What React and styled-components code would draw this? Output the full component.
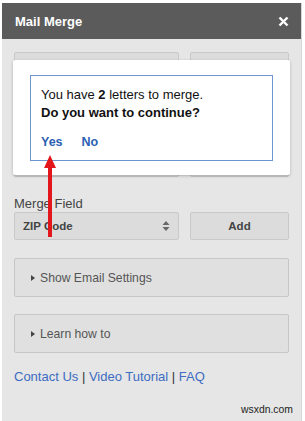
import React from 'react';
import styled, { createGlobalStyle } from 'styled-components';

const Global = createGlobalStyle`
  html, body {
    margin: 0;
    padding: 0;
    background: #ffffff;
    font-family: "Liberation Sans", Arial, sans-serif;
  }
`;

const Panel = styled.div`
  width: 300px;
  height: 418px;
  margin: 3px 0 0 2px;
  background: #e6e6e6;
  border-right: 1px solid #d6d6d6;
  box-sizing: border-box;
  display: flex;
  flex-direction: column;
`;

const Header = styled.div`
  height: 36px;
  background: #5b5b5b;
  color: #fff;
  display: flex;
  align-items: center;
  justify-content: space-between;
  padding: 0 12px 0 13px;
  font-size: 13px;
  font-weight: bold;
`;

const Body = styled.div`
  position: relative;
  flex: 1;
  padding: 13px 12px 0 12px;
  display: flex;
  flex-direction: column;
`;

const Row = styled.div`
  display: flex;
  gap: 11px;
  height: ${p => p.$h}px;
`;

const Box = styled.div`
  box-sizing: border-box;
  width: ${p => p.$w}px;
  height: 100%;
  background: #dcdcdc;
  border: 1px solid #c9c9c9;
  border-radius: 2px;
  display: flex;
  align-items: center;
  justify-content: ${p => (p.$center ? 'center' : 'space-between')};
  padding: 0 8px;
  font-size: 11.5px;
  font-weight: bold;
  color: #444;
`;

const Label = styled.div`
  margin-top: 19px;
  height: 16px;
  line-height: 16px;
  font-size: 13px;
  color: #444;
`;

const Collapse = styled.div`
  box-sizing: border-box;
  height: 39px;
  margin-top: ${p => p.$mt}px;
  background: #e0e0e0;
  border: 1px solid #c6c6c6;
  border-radius: 2px;
  display: flex;
  align-items: center;
  gap: 5px;
  padding-left: 16px;
  font-size: 12.2px;
  color: #555;
`;

const Tri = styled.span`
  width: 0;
  height: 0;
  border-top: 3.5px solid transparent;
  border-bottom: 3.5px solid transparent;
  border-left: 4px solid #444;
`;

const Links = styled.div`
  margin-top: 16px;
  line-height: 16px;
  font-size: 13px;
  color: #333;
  a {
    color: #3d6cc2;
    text-decoration: none;
  }
`;

const Watermark = styled.div`
  margin-top: auto;
  margin-bottom: 6px;
  align-self: flex-end;
  margin-right: -4px;
  font-size: 10.4px;
  color: #222;
`;

const Card = styled.div`
  position: absolute;
  top: 21px;
  left: 11px;
  width: 277px;
  height: 115px;
  box-sizing: border-box;
  background: #fff;
  border-radius: 2px;
  box-shadow: 0 1px 3px rgba(0, 0, 0, 0.25);
  padding: 15px 17px 0 17px;
`;

const Dialog = styled.div`
  box-sizing: border-box;
  height: 86px;
  border: 1px solid #6e95cf;
  padding: 10px 10px 0 10px;
  font-size: 13px;
  line-height: 18px;
  color: #111;
`;

const Actions = styled.div`
  display: flex;
  gap: 19px;
  margin-top: 11px;
  font-size: 12.5px;
  font-weight: bold;
  color: #2c5fb3;
`;

const Arrow = styled.svg`
  position: absolute;
  left: 41px;
  top: 116px;
`;

const Updown = () => (
  <svg width="8" height="12" viewBox="0 0 8 12">
    <path d="M4 1 L7.5 5 H0.5 Z" fill="#666" />
    <path d="M4 11 L7.5 7 H0.5 Z" fill="#666" />
  </svg>
);

const Close = () => (
  <svg width="11" height="11" viewBox="0 0 11 11">
    <path d="M1.5 1.5 L9.5 9.5 M9.5 1.5 L1.5 9.5" stroke="#fff" strokeWidth="2.4" />
  </svg>
);

export default function App() {
  return (
    <>
      <Global />
      <Panel>
        <Header>
          <span>Mail Merge</span>
          <Close />
        </Header>
        <Body>
          <Row $h={125}>
            <Box $w={165} />
            <Box $w={99} />
          </Row>
          <Label>Merge Field</Label>
          <Row $h={28}>
            <Box $w={165}>
              <span>ZIP Code</span>
              <Updown />
            </Box>
            <Box $w={99} $center>Add</Box>
          </Row>
          <Collapse $mt={18}><Tri />Show Email Settings</Collapse>
          <Collapse $mt={17}><Tri />Learn how to</Collapse>
          <Links>
            <a href="#">Contact Us</a> | <a href="#">Video Tutorial</a> | <a href="#">FAQ</a>
          </Links>
          <Watermark>wsxdn.com</Watermark>

          <Card>
            <Dialog>
              <div>You have <b>2</b> letters to merge.</div>
              <div><b>Do you want to continue?</b></div>
              <Actions>
                <span>Yes</span>
                <span>No</span>
              </Actions>
            </Dialog>
          </Card>
          <Arrow width="14" height="84" viewBox="0 0 14 84">
            <path d="M7 0 L13 13 H9 V82 H5 V13 H1 Z" fill="#e3161b" />
          </Arrow>
        </Body>
      </Panel>
    </>
  );
}
